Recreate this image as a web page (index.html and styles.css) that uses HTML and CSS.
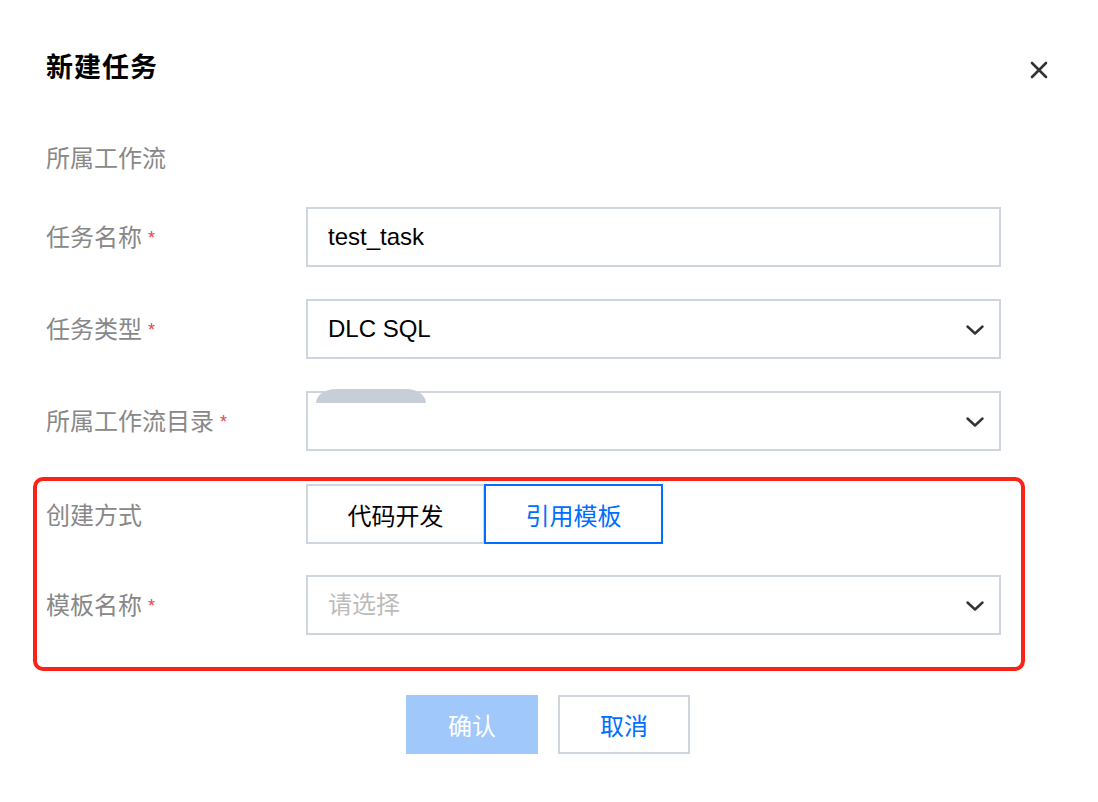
FILE: index.html
```html
<!DOCTYPE html>
<html lang="zh">
<head>
<meta charset="utf-8">
<title>新建任务</title>
<link rel="stylesheet" href="styles.css">
</head>
<body>
<div class="modal">
  <div class="header">
    <h1 class="title">新建任务</h1>
    <button class="close" aria-label="关闭">
      <svg width="18" height="18" viewBox="0 0 18 18"><path d="M2 2 L16 16 M16 2 L2 16" stroke="#333" stroke-width="2.6" stroke-linecap="round" fill="none"/></svg>
    </button>
  </div>

  <div class="form">
    <div class="row row-plain">
      <div class="label">所属工作流</div>
    </div>
    <div class="row">
      <div class="label">任务名称<span class="req">*</span></div>
      <div class="control"><div class="field">test_task</div></div>
    </div>
    <div class="row">
      <div class="label">任务类型<span class="req">*</span></div>
      <div class="control"><div class="field select">DLC SQL
        <svg class="chev" width="18" height="10" viewBox="0 0 18 10"><path d="M1.5 1.5 L9 8.5 L16.5 1.5" stroke="#333" stroke-width="2.4" fill="none" stroke-linecap="round" stroke-linejoin="round"/></svg>
      </div></div>
    </div>
    <div class="row">
      <div class="label">所属工作流目录<span class="req">*</span></div>
      <div class="control"><div class="field select"><span class="blob"></span>
        <svg class="chev" width="18" height="10" viewBox="0 0 18 10"><path d="M1.5 1.5 L9 8.5 L16.5 1.5" stroke="#333" stroke-width="2.4" fill="none" stroke-linecap="round" stroke-linejoin="round"/></svg>
      </div></div>
    </div>

    <div class="highlight">
      <div class="row">
        <div class="label">创建方式</div>
        <div class="control">
          <div class="segmented">
            <button class="seg">代码开发</button>
            <button class="seg seg-active">引用模板</button>
          </div>
        </div>
      </div>
      <div class="row">
        <div class="label">模板名称<span class="req">*</span></div>
        <div class="control"><div class="field select placeholder">请选择
          <svg class="chev" width="18" height="10" viewBox="0 0 18 10"><path d="M1.5 1.5 L9 8.5 L16.5 1.5" stroke="#333" stroke-width="2.4" fill="none" stroke-linecap="round" stroke-linejoin="round"/></svg>
        </div></div>
      </div>
    </div>
  </div>

  <div class="footer">
    <button class="btn btn-primary">确认</button>
    <button class="btn btn-default">取消</button>
  </div>
</div>
</body>
</html>
```

FILE: styles.css
```css
* { box-sizing: border-box; }
html, body { margin: 0; padding: 0; background: #fff; }
body {
  font-family: "Liberation Sans", "Noto Sans CJK SC", sans-serif;
  color: #000;
  width: 1098px;
  height: 802px;
  overflow: hidden;
}
.modal {
  padding: 48px 51px 0 46px;
}
.header {
  display: flex;
  align-items: center;
  justify-content: space-between;
  height: 40px;
}
.title {
  margin: 0;
  font-size: 27px;
  font-weight: 700;
  line-height: 40px;
  letter-spacing: 1px;
}
.close {
  border: 0;
  background: none;
  padding: 0;
  width: 18px;
  height: 18px;
  margin-top: 4px;
  margin-right: -1px;
  display: flex;
}
.form {
  display: flex;
  flex-direction: column;
  gap: 32px;
  margin-top: 49px;
  width: 955px;
}
.row {
  display: flex;
  align-items: center;
  height: 60px;
}
.row-plain {
  height: 40px;
  margin-bottom: -2px;
}
.label {
  width: 260px;
  flex: none;
  font-size: 24px;
  line-height: 32px;
  color: #888;
  padding-top: 3px;
}
.req {
  color: #e54545;
  font-size: 18px;
  margin-left: 6px;
  position: relative;
  top: -2px;
}
.control {
  flex: 1;
  height: 60px;
}
.field {
  position: relative;
  height: 60px;
  border: 2px solid #cfd5de;
  padding: 0 20px;
  font-size: 24px;
  line-height: 56px;
  color: #000;
  display: flex;
  align-items: center;
}
.field > :first-child { }
.select { padding-right: 16px; }
.chev {
  position: absolute;
  right: 15px;
  top: 24px;
}
.placeholder { color: #bbb; }
.blob {
  position: absolute;
  left: 8px;
  top: -4px;
  width: 110px;
  height: 14px;
  background: #c8ced8;
  border-radius: 20px 20px 0 0 / 14px 14px 0 0;
}
.highlight {
  display: flex;
  flex-direction: column;
  gap: 31px;
  margin: -6px -24px 0 -13px;
  padding: 3px 20px 32px 9px;
  border: 4px solid #fa2318;
  border-radius: 10px;
}
.segmented {
  display: flex;
  height: 60px;
}
.seg {
  font-family: inherit;
  width: 179px;
  height: 60px;
  background: #fff;
  border: 2px solid #cfd5de;
  font-size: 24px;
  color: #000;
  padding: 0;
}
.seg + .seg { margin-left: -1px; }
.seg-active {
  border-color: #006eff;
  color: #006eff;
  position: relative;
}
.footer {
  display: flex;
  justify-content: center;
  gap: 20px;
  margin-top: 24px;
  padding-left: 3px;
}
.btn {
  font-family: inherit;
  width: 132px;
  height: 59px;
  font-size: 24px;
  padding: 0;
  background: #fff;
}
.btn-primary {
  background: #a1c8fb;
  border: 0;
  color: #fff;
}
.btn-default {
  border: 2px solid #cfd5de;
  color: #006eff;
}
```
